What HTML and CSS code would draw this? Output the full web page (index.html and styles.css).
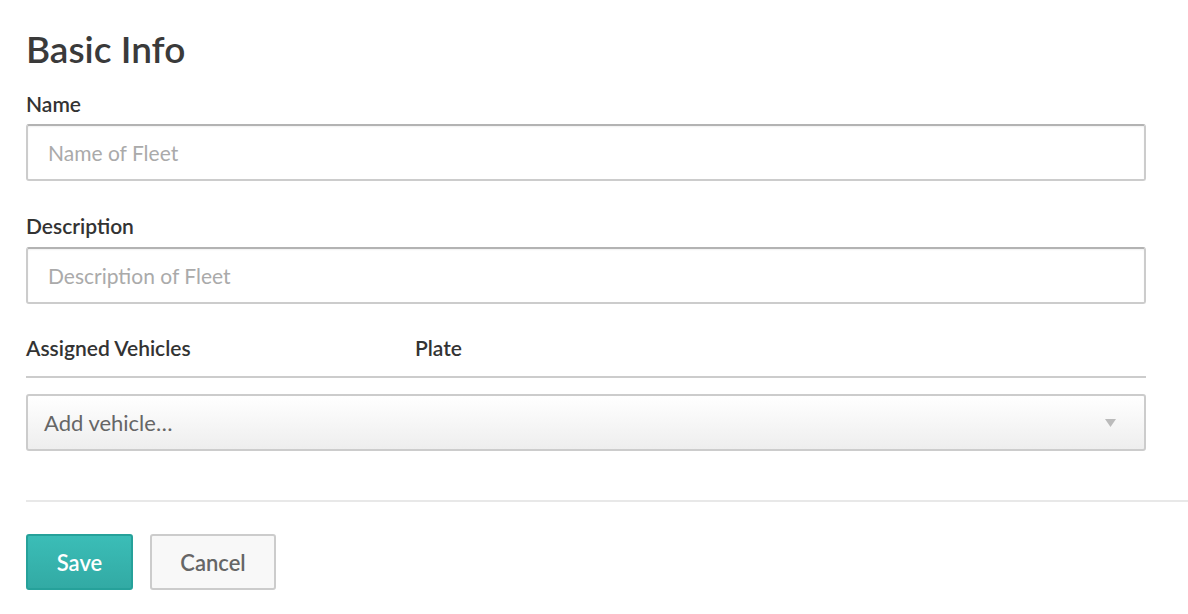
FILE: index.html
```html
<!DOCTYPE html>
<html lang="en">
<head>
  <meta charset="UTF-8">
  <title>Basic Info</title>
  <link rel="stylesheet" href="styles.css">
</head>
<body>
  <main class="page">
    <form class="fleet-form">
      <section class="fields">
        <h1>Basic Info</h1>

        <label class="field-label" for="name">Name</label>
        <input class="text-input" id="name" type="text" placeholder="Name of Fleet">

        <label class="field-label label-desc" for="desc">Description</label>
        <input class="text-input" id="desc" type="text" placeholder="Description of Fleet">

        <div class="vehicles-head">
          <span class="col-vehicle">Assigned Vehicles</span>
          <span class="col-plate">Plate</span>
        </div>

        <div class="select-box">
          <span>Add vehicle…</span>
          <svg class="caret" width="11" height="8" viewBox="0 0 11 8"><path d="M0 0h11L5.5 8z" fill="#bbb"/></svg>
        </div>
      </section>

      <hr class="divider">

      <div class="actions">
        <button type="button" class="btn btn-save">Save</button>
        <button type="button" class="btn btn-cancel">Cancel</button>
      </div>
    </form>
  </main>
</body>
</html>
```

FILE: styles.css
```css
body {
  font-family: Lato, "Open Sans", sans-serif;
  margin: 0;
  background-color: #fff;
  color: #333;
}

.page {
  padding: 29px 0 0 26px;
}

.fields {
  width: 1120px;
  display: flex;
  flex-direction: column;
}

h1 {
  margin: 0;
  font-size: 37px;
  line-height: 40px;
  font-weight: 600;
  color: #3a3a3a;
}

.field-label {
  margin-top: 25px;
  font-size: 21px;
  line-height: 20px;
  font-weight: 600;
  color: #333;
}

.label-desc {
  margin-top: 35px;
}

.text-input {
  box-sizing: border-box;
  margin-top: 10px;
  height: 57px;
  padding: 0 20px;
  border: 2px solid #ccc;
  border-top-color: #b3b3b3;
  border-radius: 3px;
  box-shadow: inset 0 1px 2px rgba(0, 0, 0, 0.06);
  font-family: inherit;
  font-size: 21px;
  color: #333;
  outline: none;
}

.label-desc + .text-input {
  margin-top: 11px;
}

.text-input::placeholder {
  color: #aaa;
}

.vehicles-head {
  display: flex;
  margin-top: 34px;
  padding-bottom: 18px;
  border-bottom: 2px solid #ccc;
  font-size: 21px;
  line-height: 20px;
  font-weight: 600;
}

.col-vehicle {
  width: 389px;
}

.select-box {
  box-sizing: border-box;
  margin-top: 16px;
  height: 57px;
  display: flex;
  align-items: center;
  justify-content: space-between;
  padding: 0 28px 0 16px;
  border: 2px solid #ccc;
  border-radius: 3px;
  background: linear-gradient(#fff, #eee);
  font-size: 22px;
  color: #666;
}

.divider {
  margin: 49px 0 0;
  border: 0;
  border-top: 2px solid #e8e8e8;
}

.actions {
  display: flex;
  gap: 17px;
  margin-top: 32px;
}

.btn {
  box-sizing: border-box;
  height: 56px;
  border-radius: 3px;
  font-family: inherit;
  font-size: 22px;
  font-weight: 600;
}

.btn-save {
  width: 107px;
  border: 2px solid #26a19a;
  background: linear-gradient(#3bbdb7, #32aaa4);
  color: #fff;
}

.btn-cancel {
  width: 126px;
  border: 2px solid #ccc;
  background: #f8f8f8;
  color: #666;
}
```
